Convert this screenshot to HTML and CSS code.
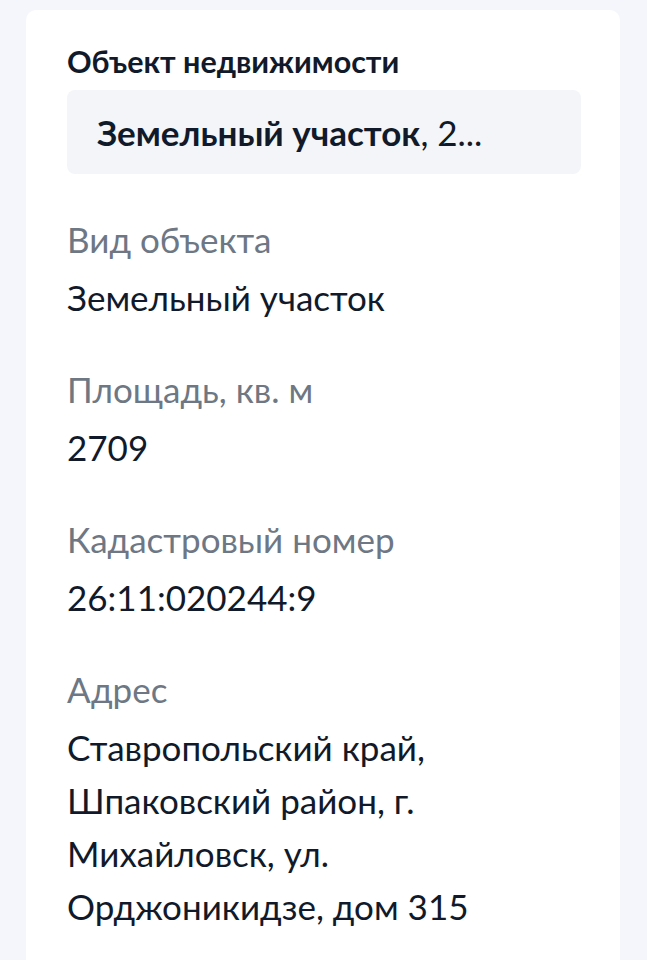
FILE: index.html
```html
<!DOCTYPE html>
<html lang="ru">
<head>
    <meta charset="UTF-8">
    <meta name="viewport" content="width=device-width, initial-scale=1.0">
    <title>Объект недвижимости</title>
    <link rel="stylesheet" href="styles.css">
</head>
<body>
    <div class="card">
        <h2 class="card-title">Объект недвижимости</h2>
        <div class="object-select">
            <span class="object-name">Земельный участок</span>, 2...
        </div>

        <dl class="details">
            <div class="detail">
                <dt class="detail-label">Вид объекта</dt>
                <dd class="detail-value">Земельный участок</dd>
            </div>
            <div class="detail">
                <dt class="detail-label">Площадь, кв. м</dt>
                <dd class="detail-value">2709</dd>
            </div>
            <div class="detail">
                <dt class="detail-label">Кадастровый номер</dt>
                <dd class="detail-value">26:11:020244:9</dd>
            </div>
            <div class="detail">
                <dt class="detail-label">Адрес</dt>
                <dd class="detail-value">Ставропольский край, Шпаковский район, г. Михайловск, ул. Орджоникидзе, дом 315</dd>
            </div>
        </dl>
    </div>
</body>
</html>
```

FILE: styles.css
```css
:root {
    --page-bg: #f4f6fb;
    --card-bg: #ffffff;
    --field-bg: #f3f5f9;
    --text: #111a2a;
    --muted: #6e7784;
}

* {
    margin: 0;
    padding: 0;
    box-sizing: border-box;
}

body {
    font-family: Lato, "Noto Sans", sans-serif;
    background: var(--page-bg);
    color: var(--text);
    padding: 10px 27px 0 26px;
    min-height: 100vh;
}

.card {
    background: var(--card-bg);
    border-radius: 10px 10px 0 0;
    padding: 33px 39px 40px 41px;
    min-height: 950px;
}

.card-title {
    font-size: 30.5px;
    font-weight: 700;
    line-height: 36px;
}

.object-select {
    margin-top: 11px;
    background: var(--field-bg);
    border-radius: 8px;
    padding: 16px 30px;
    font-size: 35px;
    line-height: 52px;
    white-space: nowrap;
    overflow: hidden;
}

.object-name {
    font-weight: 700;
}

.details {
    display: flex;
    flex-direction: column;
    gap: 39px;
    margin-top: 39px;
}

.detail-label {
    font-size: 35px;
    line-height: 53px;
    color: var(--muted);
    margin-bottom: 5px;
}

.detail-value {
    font-size: 35px;
    line-height: 53px;
}
```
